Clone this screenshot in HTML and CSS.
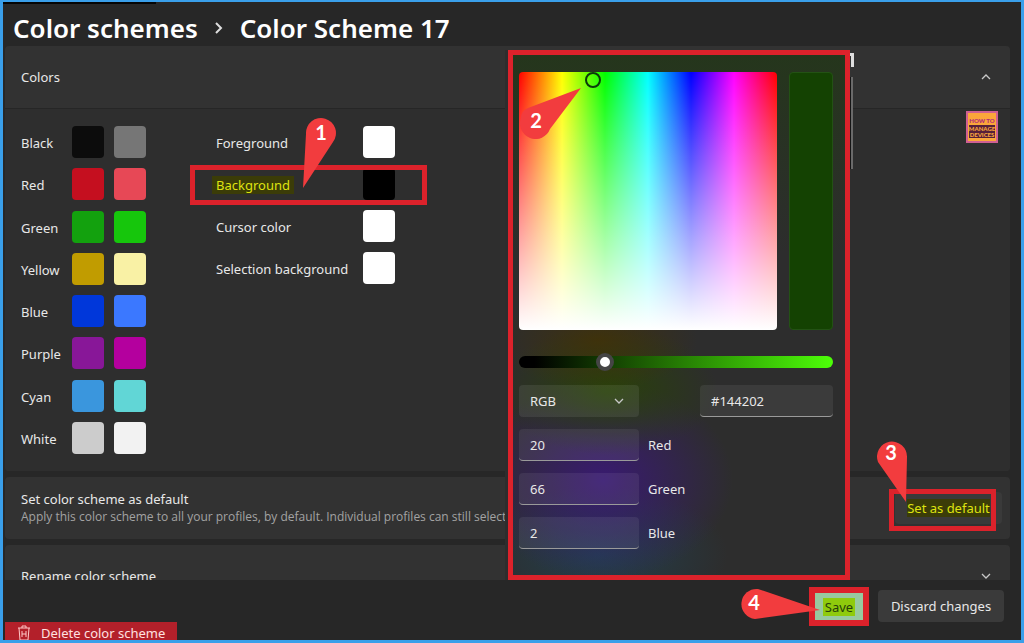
FILE: index.html
```html
<!DOCTYPE html>
<html lang="en">
<head>
    <meta charset="UTF-8">
    <meta name="viewport" content="width=device-width, initial-scale=1.0">
    <title>Color Scheme 17</title>
    <link rel="stylesheet" href="styles.css">
</head>
<body>
    <div class="window">
        <header class="breadcrumb">
            <a href="#schemes">Color schemes</a>
            <svg class="crumb-arrow" viewBox="0 0 10 14"><path d="M2 2l5 5-5 5"/></svg>
            <h1>Color Scheme 17</h1>
        </header>

        <main class="content">
            <section class="card">
                <div class="card-header">
                    <h2>Colors</h2>
                    <svg class="chevron" viewBox="0 0 10 6"><path d="M1 5l4-4 4 4"/></svg>
                </div>
                <div class="colors-body">
                    <div class="ansi-colors">
                        <div class="color-row"><span>Black</span><button class="swatch black" aria-label="Black"></button><button class="swatch bright-black" aria-label="Bright black"></button></div>
                        <div class="color-row"><span>Red</span><button class="swatch red" aria-label="Red"></button><button class="swatch bright-red" aria-label="Bright red"></button></div>
                        <div class="color-row"><span>Green</span><button class="swatch green" aria-label="Green"></button><button class="swatch bright-green" aria-label="Bright green"></button></div>
                        <div class="color-row"><span>Yellow</span><button class="swatch yellow" aria-label="Yellow"></button><button class="swatch bright-yellow" aria-label="Bright yellow"></button></div>
                        <div class="color-row"><span>Blue</span><button class="swatch blue" aria-label="Blue"></button><button class="swatch bright-blue" aria-label="Bright blue"></button></div>
                        <div class="color-row"><span>Purple</span><button class="swatch purple" aria-label="Purple"></button><button class="swatch bright-purple" aria-label="Bright purple"></button></div>
                        <div class="color-row"><span>Cyan</span><button class="swatch cyan" aria-label="Cyan"></button><button class="swatch bright-cyan" aria-label="Bright cyan"></button></div>
                        <div class="color-row"><span>White</span><button class="swatch white" aria-label="White"></button><button class="swatch bright-white" aria-label="Bright white"></button></div>
                    </div>
                    <div class="system-colors">
                        <div class="color-row"><span>Foreground</span><button class="swatch plain" aria-label="Foreground"></button></div>
                        <div class="color-row marked">
                            <span><mark>Background</mark></span><button class="swatch plain-black" aria-label="Background"></button>
                            <div class="frame frame-background"></div>
                            <svg class="pin pin-1" viewBox="0 0 36 74"><path d="M5 18A15 15 0 1 1 32 26L2 72Z"/><text x="20" y="24">1</text></svg>
                        </div>
                        <div class="color-row"><span>Cursor color</span><button class="swatch plain" aria-label="Cursor color"></button></div>
                        <div class="color-row"><span>Selection background</span><button class="swatch plain" aria-label="Selection background"></button></div>
                    </div>
                    <svg class="logo" viewBox="0 0 32 32">
                        <rect x="1" y="1" width="30" height="30" fill="#fba63a" stroke="#cf5f92" stroke-width="2"/>
                        <text x="16" y="12" fill="#b02a7c">HOW TO</text>
                        <path d="M3 14h26v13H3Z" fill="#57203a"/>
                        <text x="16" y="20" fill="#f9a53c">MANAGE</text>
                        <text x="16" y="26" fill="#f9a53c">DEVICES</text>
                    </svg>
                </div>
            </section>

            <section class="card default-card">
                <div>
                    <h2>Set color scheme as default</h2>
                    <p>Apply this color scheme to all your profiles, by default. Individual profiles can still select their own color schemes.</p>
                </div>
                <div class="marked">
                    <button class="btn btn-default"><mark>Set as default</mark></button>
                    <div class="frame frame-default"></div>
                    <svg class="pin pin-3" viewBox="0 0 34 66"><path d="M3 25A15 15 0 1 1 32 20L31 65Z"/><text x="16" y="23">3</text></svg>
                </div>
            </section>

            <section class="card">
                <div class="card-header">
                    <h2>Rename color scheme</h2>
                    <svg class="chevron" viewBox="0 0 10 6"><path d="M1 1l4 4 4-4"/></svg>
                </div>
            </section>
        </main>

        <footer class="actions">
            <button class="btn-delete">
                <svg viewBox="0 0 14 16"><path d="M1 3h12M5 3V1h4v2M2 3l1 12h8l1-12M5 6v6M9 6v6M5 9h4"/></svg>
                Delete color scheme
            </button>
            <div class="marked">
                <button class="btn-save"><mark>Save</mark></button>
                <svg class="pin pin-4" viewBox="0 0 84 32"><path d="M17 31A15 15 0 1 1 20 1L82 22Z"/><text x="16" y="22">4</text></svg>
            </div>
            <button class="btn btn-discard">Discard changes</button>
        </footer>

        <div class="peek"></div>
        <div class="picker">
            <div class="picker-top">
                <div class="spectrum">
                    <div class="cursor"></div>
                    <svg class="pin pin-2" viewBox="0 0 64 52"><path d="M1 31Q1 24 8 21L61 1 30 42A15 15 0 0 1 1 31Z"/><text x="16" y="41">2</text></svg>
                </div>
                <div class="preview"></div>
            </div>
            <input type="range" class="value-slider" min="0" max="100" value="26" aria-label="Value">
            <div class="picker-model">
                <div class="select-wrap">
                    <select aria-label="Color model"><option>RGB</option><option>HSV</option></select>
                    <svg class="chevron" viewBox="0 0 10 6"><path d="M1 1l4 4 4-4"/></svg>
                </div>
                <input type="text" class="field hex" value="#144202" aria-label="Hex">
            </div>
            <div class="channel"><input type="text" class="field" id="red" value="20"><label for="red">Red</label></div>
            <div class="channel"><input type="text" class="field" id="green" value="66"><label for="green">Green</label></div>
            <div class="channel"><input type="text" class="field" id="blue" value="2"><label for="blue">Blue</label></div>
        </div>
    </div>
</body>
</html>
```
FILE: styles.css
```css
:root {
    --accent: #3a9fea;
    --bg: #272727;
    --card: #323232;
    --card-body: #2e2e2e;
    --text: #e8e8e8;
    --frame: #dc222b;
    --pin: #f23c3e;
}

* {
    box-sizing: border-box;
}

body {
    margin: 0;
    font-family: "Noto Sans", "Open Sans", sans-serif;
    font-size: 13px;
    line-height: 18px;
    color: var(--text);
    background: var(--bg);
}

button,
input,
select {
    font: inherit;
    color: inherit;
    border: none;
    padding: 0;
}

h1,
h2,
p {
    margin: 0;
}

h2 {
    font-size: 13px;
    font-weight: 400;
}

mark {
    color: #dfe310;
    background: #3b3c08;
}

.window {
    position: relative;
    display: flex;
    flex-direction: column;
    height: 100vh;
    border: 3px solid var(--accent);
    border-top-width: 2px;
    background: var(--bg);
    overflow: hidden;
}

.window::before {
    content: "";
    position: absolute;
    top: 0;
    left: 0;
    width: 15%;
    height: 2px;
    background: #050505;
}

.breadcrumb {
    flex: 0 0 44px;
    display: flex;
    align-items: center;
    padding: 8px 10px 0;
    font-size: 26px;
    font-weight: 600;
    line-height: 36px;
    color: #fff;
}

.breadcrumb a {
    color: inherit;
    text-decoration: none;
}

.breadcrumb h1 {
    font-size: inherit;
    font-weight: inherit;
}

.crumb-arrow {
    width: 10px;
    height: 14px;
    margin: 0 16px;
    fill: none;
    stroke: #ddd;
    stroke-width: 2;
}

.content {
    flex: 1;
    min-height: 0;
    display: flex;
    flex-direction: column;
    gap: 6px;
    padding: 0 11px 0 2px;
    overflow: hidden;
}

.card {
    flex: none;
    border-radius: 4px;
    background: var(--card);
}

.card-header {
    display: flex;
    justify-content: space-between;
    align-items: center;
    height: 62px;
    padding: 0 19px 0 16px;
}

.chevron {
    width: 10px;
    height: 6px;
    fill: none;
    stroke: #c8c8c8;
    stroke-width: 1.3;
}

.colors-body {
    display: flex;
    align-items: flex-start;
    padding: 17px 12px 17px 16px;
    border-top: 1px solid #262626;
    border-radius: 0 0 4px 4px;
    background: var(--card-body);
}

.ansi-colors,
.system-colors {
    display: flex;
    flex-direction: column;
    gap: 10px;
}

.ansi-colors {
    justify-content: space-between;
    height: 328px;
    width: 125px;
    margin-right: 70px;
}

.color-row {
    display: flex;
    align-items: center;
    gap: 10px;
}

.color-row span {
    padding-top: 2px;
    white-space: nowrap;
}

.ansi-colors span {
    width: 41px;
}

.system-colors span {
    width: 137px;
}

.swatch {
    width: 32px;
    height: 32px;
    border-radius: 4px;
}

.black { background: #0c0c0c; }
.bright-black { background: #767676; }
.red { background: #c50f1f; }
.bright-red { background: #e74856; }
.green { background: #13a10e; }
.bright-green { background: #16c60c; }
.yellow { background: #c19c00; }
.bright-yellow { background: #f9f1a5; }
.blue { background: #0037da; }
.bright-blue { background: #3b78ff; }
.purple { background: #881798; }
.bright-purple { background: #b4009e; }
.cyan { background: #3a96dd; }
.bright-cyan { background: #61d6d6; }
.white { background: #cccccc; }
.bright-white { background: #f2f2f2; }
.plain { background: #ffffff; }
.plain-black { background: #000000; }

.logo {
    width: 32px;
    height: 32px;
    margin: -15px 0 0 auto;
    font-family: Lato, sans-serif;
    font-size: 6px;
    font-weight: 900;
    text-anchor: middle;
}

.default-card {
    display: flex;
    justify-content: space-between;
    align-items: center;
    height: 62px;
    padding: 0 8px 0 16px;
}

.default-card p {
    font-family: "Open Sans", sans-serif;
    font-size: 12px;
    color: #a3a3a3;
    white-space: nowrap;
}

.btn {
    height: 32px;
    border-radius: 4px;
    background: #3a3a3a;
}

.btn-default {
    width: 107px;
}

.btn-discard {
    width: 126px;
}

.actions {
    flex: 0 0 60px;
    display: flex;
    align-items: flex-start;
    gap: 9px;
    padding: 7px 17px 0 2px;
}

.actions .btn {
    margin-top: 3px;
}

.btn-delete {
    align-self: flex-end;
    display: flex;
    align-items: center;
    gap: 10px;
    height: 22px;
    margin: 0 auto -4px 0;
    padding: 0 12px;
    background: #b3202a;
    color: #ffe1e1;
}

.btn-delete svg {
    width: 14px;
    height: 16px;
    fill: none;
    stroke: #ffc9c9;
}

.btn-save {
    width: 60px;
    height: 39px;
    border: 6px solid var(--frame);
    background: #98c9a0;
}

.btn-save mark {
    padding: 0 2px;
    color: #26400a;
    background: #8fcb0c;
}

/* numbered callouts */
.marked {
    position: relative;
}

.frame {
    position: absolute;
    border: 5px solid var(--frame);
    pointer-events: none;
}

.frame-background {
    inset: -3px -32px -5px -26px;
}

.frame-background + .pin {
    z-index: 1;
}

.marked span mark {
    margin-left: -4px;
    padding: 0 4px;
}

.frame-default {
    inset: -3px 6px -7px -6px;
}

.pin {
    position: absolute;
    fill: var(--pin);
    pointer-events: none;
}

.pin text {
    fill: #fff;
    font-family: Lato, sans-serif;
    font-size: 20px;
    font-weight: 700;
    text-anchor: middle;
}

.pin-1 {
    left: 85px;
    top: -52px;
    width: 36px;
    height: 74px;
}

.pin-2 {
    left: 1px;
    top: 15px;
    width: 64px;
    height: 52px;
}

.pin-3 {
    left: -20px;
    top: -55px;
    width: 34px;
    height: 66px;
}

.pin-4 {
    left: -71px;
    top: 1px;
    width: 84px;
    height: 32px;
}

/* bit of the window behind the flyout */
.peek {
    position: absolute;
    left: 838px;
    top: 51px;
    width: 13px;
    height: 14px;
    border: 3px solid #ddd;
    border-bottom: none;
}

.peek::after {
    content: "";
    position: absolute;
    right: -2px;
    top: 21px;
    width: 2px;
    height: 92px;
    background: #6a6a6a;
    border-left: 1px solid #151515;
}

.picker {
    position: absolute;
    top: 48px;
    left: 505px;
    width: 342px;
    height: 530px;
    padding: 17px 12px 0 6px;
    border: 5px solid var(--frame);
    background:
        radial-gradient(ellipse 100px 50px at 85px 285px, rgba(70, 50, 0, 0.7), transparent),
        radial-gradient(ellipse 110px 65px at 95px 335px, rgba(40, 70, 0, 0.8), transparent),
        radial-gradient(ellipse 130px 100px at 90px 425px, rgba(60, 22, 130, 0.8), transparent),
        radial-gradient(ellipse 130px 70px at 85px 500px, rgba(30, 70, 90, 0.7), transparent),
        linear-gradient(#25361c, #2d2d2d 38%);
    box-shadow: -3px 0 0 #2d2d2d;
}

.picker-top {
    display: flex;
    justify-content: space-between;
}

.spectrum {
    position: relative;
    width: 258px;
    height: 258px;
    border-radius: 4px;
    background:
        linear-gradient(transparent, #fff),
        linear-gradient(to right, #f00, #ff0, #0f0, #0ff, #00f, #f0f, #f00);
}

.cursor {
    position: absolute;
    left: 66px;
    top: 0;
    width: 16px;
    height: 16px;
    border: 2px solid #0b3a0b;
    border-radius: 50%;
}

.preview {
    width: 44px;
    border: 1px solid #235214;
    border-radius: 4px;
    background: #144202;
}

.value-slider {
    appearance: none;
    display: block;
    width: 100%;
    height: 12px;
    margin: 26px 0 17px;
    border-radius: 6px;
    background: linear-gradient(to right, #000 5%, #4dff08);
}

.value-slider::-webkit-slider-thumb {
    appearance: none;
    width: 18px;
    height: 18px;
    border: 4px solid #454545;
    border-radius: 50%;
    background: #fff;
}

.picker-model {
    display: flex;
    justify-content: space-between;
    margin-bottom: 12px;
}

.select-wrap {
    position: relative;
    width: 120px;
}

.select-wrap select {
    appearance: none;
    width: 100%;
    height: 32px;
    padding: 0 11px;
    border-radius: 4px;
    background: rgba(255, 255, 255, 0.08);
}

.select-wrap .chevron {
    position: absolute;
    right: 15px;
    top: 13px;
    pointer-events: none;
}

.field {
    width: 120px;
    height: 32px;
    padding: 0 11px;
    border-bottom: 1px solid #9a9a9a;
    border-radius: 4px;
    background: rgba(255, 255, 255, 0.07);
}

.hex {
    width: 133px;
}

.channel {
    display: flex;
    align-items: center;
    gap: 9px;
    margin-bottom: 12px;
}
```
